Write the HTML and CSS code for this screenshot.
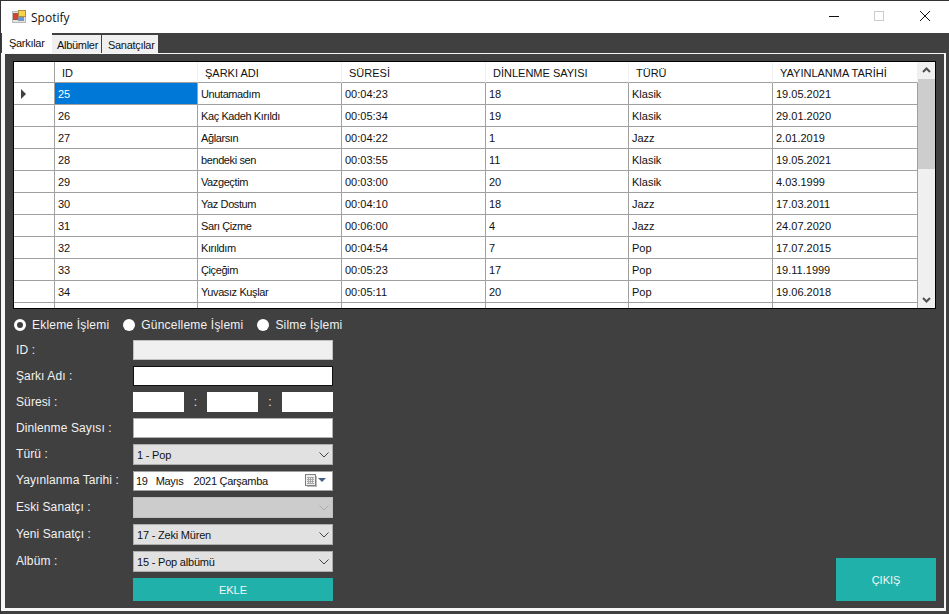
FILE: index.html
```html
<!DOCTYPE html>
<html>
<head>
  <title>Spotify</title>
  <link rel="stylesheet" href="styles.css">
</head>
<body>
  <div class="window">
    <div class="titlebar">
      <svg class="app-icon" width="16" height="16" viewBox="0 0 16 16">
        <rect x="0.5" y="2.5" width="13" height="11" fill="#e4e4e4" stroke="#b8b8b8"/>
        <rect x="1.500" y="4.500" width="4" height="6" fill="#d8402f" stroke="#8f5a50"/>
        <rect x="6.500" y="1.500" width="7" height="6" fill="#f8d24a" stroke="#b09040"/>
        <rect x="6.500" y="8.500" width="5" height="3" fill="#5c9be0" stroke="#7f93b0"/>
      </svg>
      <span class="app-name">Spotify</span>
      <div class="win-buttons">
        <svg class="win-btn" width="46" height="32" viewBox="0 0 46 32"><path d="M19 15.500h10" stroke="#111" fill="none"/></svg>
        <svg class="win-btn" width="46" height="32" viewBox="0 0 46 32"><rect x="18.500" y="10.500" width="9" height="9" stroke="#ccc" fill="none"/></svg>
        <svg class="win-btn" width="46" height="32" viewBox="0 0 46 32"><path d="M18 10l10 10M28 10l-10 10" stroke="#111" fill="none"/></svg>
      </div>
    </div>

    <div class="tabs">
      <div class="tab active">Şarkılar</div>
      <div class="tab">Albümler</div>
      <div class="tab last">Sanatçılar</div>
    </div>

    <div class="tabpage">
      <div class="gridview">
        <table class="grid">
          <colgroup>
            <col class="c-head"><col class="c-id"><col class="c-name"><col class="c-time"><col class="c-count"><col class="c-type"><col class="c-date">
          </colgroup>
          <thead>
            <tr><th class="corner"></th><th>ID</th><th>ŞARKI ADI</th><th>SÜRESİ</th><th>DİNLENME SAYISI</th><th>TÜRÜ</th><th>YAYINLANMA TARİHİ</th></tr>
          </thead>
          <tbody>
            <tr><td class="rowhead"><span class="arrow"></span></td><td class="selected">25</td><td class="name">Unutamadım</td><td>00:04:23</td><td>18</td><td>Klasik</td><td>19.05.2021</td></tr>
            <tr><td class="rowhead"></td><td>26</td><td class="name">Kaç Kadeh Kırıldı</td><td>00:05:34</td><td>19</td><td>Klasik</td><td>29.01.2020</td></tr>
            <tr><td class="rowhead"></td><td>27</td><td class="name">Ağlarsın</td><td>00:04:22</td><td>1</td><td>Jazz</td><td>2.01.2019</td></tr>
            <tr><td class="rowhead"></td><td>28</td><td class="name">bendeki sen</td><td>00:03:55</td><td>11</td><td>Klasik</td><td>19.05.2021</td></tr>
            <tr><td class="rowhead"></td><td>29</td><td class="name">Vazgeçtim</td><td>00:03:00</td><td>20</td><td>Klasik</td><td>4.03.1999</td></tr>
            <tr><td class="rowhead"></td><td>30</td><td class="name">Yaz Dostum</td><td>00:04:10</td><td>18</td><td>Jazz</td><td>17.03.2011</td></tr>
            <tr><td class="rowhead"></td><td>31</td><td class="name">Sarı Çizme</td><td>00:06:00</td><td>4</td><td>Jazz</td><td>24.07.2020</td></tr>
            <tr><td class="rowhead"></td><td>32</td><td class="name">Kırıldım</td><td>00:04:54</td><td>7</td><td>Pop</td><td>17.07.2015</td></tr>
            <tr><td class="rowhead"></td><td>33</td><td class="name">Çiçeğim</td><td>00:05:23</td><td>17</td><td>Pop</td><td>19.11.1999</td></tr>
            <tr><td class="rowhead"></td><td>34</td><td class="name">Yuvasız Kuşlar</td><td>00:05:11</td><td>20</td><td>Pop</td><td>19.06.2018</td></tr>
            <tr><td class="rowhead"></td><td></td><td></td><td></td><td></td><td></td><td></td></tr>
          </tbody>
        </table>
        <div class="scrollbar">
          <svg class="sb-arrow" width="17" height="17" viewBox="0 0 17 17"><path d="M5 10l3.500-3.500L12 10" stroke="#505050" stroke-width="2" fill="none"/></svg>
          <div class="sb-track"><div class="sb-thumb"></div></div>
          <svg class="sb-arrow" width="17" height="17" viewBox="0 0 17 17"><path d="M5 7l3.500 3.500L12 7" stroke="#505050" stroke-width="2" fill="none"/></svg>
        </div>
      </div>

      <div class="bottom">
        <div class="form">
          <div class="radios">
            <label class="radio checked">Ekleme İşlemi</label>
            <label class="radio">Güncelleme İşlemi</label>
            <label class="radio">Silme İşlemi</label>
          </div>

          <div class="row"><span class="lbl">ID :</span><div class="input disabled"></div></div>
          <div class="row"><span class="lbl">Şarkı Adı :</span><div class="input focused"></div></div>
          <div class="row">
            <span class="lbl">Süresi :</span>
            <div class="time">
              <div class="input"></div><span class="colon">:</span><div class="input"></div><span class="colon wide">:</span><div class="input"></div>
            </div>
          </div>
          <div class="row"><span class="lbl">Dinlenme Sayısı :</span><div class="input"></div></div>
          <div class="row tall">
            <span class="lbl">Türü :</span>
            <div class="combo">1 - Pop<svg class="chev" width="10" height="6" viewBox="0 0 10 6"><path d="M0.500 0.500l4.500 4.500 4.500-4.500" stroke="#444" fill="none"/></svg></div>
          </div>
          <div class="row tall date-row">
            <span class="lbl">Yayınlanma Tarihi :</span>
            <div class="date">
              <span class="d1">19</span><span class="d2">Mayıs</span><span>2021 Çarşamba</span>
              <svg class="cal" width="22" height="14" viewBox="0 0 22 14">
                <rect x="2" y="2" width="10" height="11" fill="#bbb"/>
                <rect x="0.500" y="0.500" width="10" height="11" fill="#eee" stroke="#808080"/>
                <path d="M2 3.500h7M2 5.500h7M2 7.500h7M2 9.500h7M3.500 3v7M5.500 3v7M7.500 3v7" stroke="#a8a8a8" fill="none"/>
                <path d="M13 4h8l-4 4z" fill="#4a5f86"/>
              </svg>
            </div>
          </div>
          <div class="row tall">
            <span class="lbl">Eski Sanatçı :</span>
            <div class="combo off"><svg class="chev" width="10" height="6" viewBox="0 0 10 6"><path d="M0.500 0.500l4.500 4.500 4.500-4.500" stroke="#aaa" fill="none"/></svg></div>
          </div>
          <div class="row tall">
            <span class="lbl">Yeni Sanatçı :</span>
            <div class="combo">17 - Zeki Müren<svg class="chev" width="10" height="6" viewBox="0 0 10 6"><path d="M0.500 0.500l4.500 4.500 4.500-4.500" stroke="#444" fill="none"/></svg></div>
          </div>
          <div class="row tall">
            <span class="lbl">Albüm :</span>
            <div class="combo">15 - Pop albümü<svg class="chev" width="10" height="6" viewBox="0 0 10 6"><path d="M0.500 0.500l4.500 4.500 4.500-4.500" stroke="#444" fill="none"/></svg></div>
          </div>
          <div class="row btn-row"><button class="btn add">EKLE</button></div>
        </div>
        <button class="btn exit">ÇIKIŞ</button>
      </div>
    </div>
  </div>
</body>
</html>
```

FILE: styles.css
```css
*, *::before {
  box-sizing: border-box;
}

html, body {
  margin: 0;
  height: 100%;
}

body {
  font-family: "Liberation Sans", Arial, sans-serif;
  font-size: 11px;
  overflow: hidden;
}

.window {
  width: 949px;
  height: 614px;
  background: #404040;
  border-top: 1px solid #333;
  border-left: 1px solid #333;
  display: flex;
  flex-direction: column;
}

.titlebar {
  height: 32px;
  background: #fff;
  display: flex;
  align-items: center;
  padding-left: 11px;
  padding-right: 1px;
  flex: none;
}

.app-icon {
  display: block;
}

.app-name {
  margin-left: 3px;
  font-family: "Open Sans", sans-serif;
  font-size: 12px;
  color: #111;
}

.win-buttons {
  margin-left: auto;
  display: flex;
}

.win-btn {
  display: block;
}

.tabs {
  height: 20px;
  display: flex;
  align-items: flex-end;
  padding-left: 1px;
  flex: none;
}

.tab {
  width: 49px;
  height: 18px;
  padding: 4px 0 0 5px;
  margin-right: 1px;
  background: #f0f0f0;
  color: #111;
  letter-spacing: -0.3px;
  white-space: nowrap;
}

.tab.active {
  height: 20px;
  width: 50px;
  background: #fff;
  padding: 4px 0 0 7px;
  margin-right: 0;
}

.tab.last {
  width: 56px;
  padding-left: 6px;
}

.tabpage {
  flex: 1;
  margin: 0 3px 3px 0;
  border-style: solid;
  border-color: #f6f6f6;
  border-width: 1px 2px 3px 4px;
  background: #404040;
  padding: 7px 8px 7px 8px;
  display: flex;
  flex-direction: column;
}

.gridview {
  width: 923px;
  height: 248px;
  border: 1px solid #000;
  background: #fff;
  display: flex;
  overflow: hidden;
  flex: none;
}

.grid {
  width: 904px;
  table-layout: fixed;
  border-collapse: separate;
  border-spacing: 0;
  color: #111;
  align-self: flex-start;
  flex: none;
}

.c-head {
  width: 41px;
}

.c-id {
  width: 143px;
}

.c-name, .c-time, .c-type {
  width: 144px;
}

.c-count {
  width: 143px;
}

.c-date {
  width: 145px;
}

.grid th {
  height: 21px;
  padding: 1px 0 0 7px;
  font-weight: normal;
  text-align: left;
  border-right: 1px solid #f0f0f0;
  border-bottom: 1px solid #a0a0a0;
  white-space: nowrap;
}

.grid th.corner {
  border-right-color: #a0a0a0;
}

.grid td {
  height: 22px;
  padding: 0 0 0 3px;
  border-right: 1px solid #a0a0a0;
  border-bottom: 1px solid #a0a0a0;
  white-space: nowrap;
}

.grid td.name {
  letter-spacing: -0.4px;
}

.grid td.rowhead {
  padding: 0 0 0 7px;
}

.grid td.selected {
  background: #0078d7;
  color: #fff;
}

.arrow {
  display: block;
  width: 0;
  height: 0;
  border-left: 5px solid #404040;
  border-top: 5px solid transparent;
  border-bottom: 5px solid transparent;
}

.scrollbar {
  width: 17px;
  margin-left: auto;
  background: #f0f0f0;
  display: flex;
  flex-direction: column;
}

.sb-arrow {
  flex: none;
  display: block;
}

.sb-track {
  flex: 1;
}

.sb-thumb {
  height: 90px;
  background: #cdcdcd;
}

.bottom {
  flex: 1;
  display: flex;
  justify-content: space-between;
  align-items: flex-end;
  color: #f2f2f2;
}

.form {
  width: 340px;
  padding-top: 8px;
  font-size: 12px;
}

.radios {
  display: flex;
  height: 16px;
  margin-bottom: 7px;
  padding-left: 1px;
  align-items: center;
  white-space: nowrap;
}

.radio {
  display: flex;
  align-items: center;
  margin-right: 14px;
  letter-spacing: 0.2px;
}

.radio::before {
  content: "";
  width: 12px;
  height: 12px;
  border-radius: 50%;
  background: #fff;
  margin-right: 6px;
}

.radio.checked::before {
  background: #404040;
  border: 3px solid #fff;
}

.row {
  display: flex;
  align-items: center;
  height: 20px;
  margin-bottom: 6px;
}

.row.tall {
  height: 21px;
}

.row.date-row {
  height: 20px;
}

.lbl {
  width: 120px;
  padding-left: 3px;
  flex: none;
  letter-spacing: 0.1px;
  white-space: nowrap;
}

.row.tall .lbl {
  padding-bottom: 2px;
}

.input {
  width: 200px;
  height: 20px;
  background: #fff;
  border: 1px solid #b0b0b0;
  flex: none;
}

.input.disabled {
  background: #f0f0f0;
  border-color: #c0c0c0;
}

.input.focused {
  border-color: #111;
}

.time {
  display: flex;
  align-items: center;
  width: 200px;
}

.time .input {
  width: 51px;
  border-color: #fff;
}

.colon {
  width: 23px;
  text-align: center;
}

.colon.wide {
  width: 24px;
}

.combo {
  width: 200px;
  height: 21px;
  background: #e1e1e1;
  border: 1px solid #adadad;
  color: #111;
  font-size: 11px;
  letter-spacing: -0.2px;
  padding: 0 3px;
  display: flex;
  align-items: center;
  justify-content: space-between;
}

.combo.off {
  background: #ccc;
  border-color: #bfbfbf;
  justify-content: flex-end;
}

.date {
  width: 200px;
  height: 20px;
  background: #fff;
  border: 1px solid #a0a0a0;
  color: #111;
  font-size: 11px;
  letter-spacing: -0.3px;
  display: flex;
  align-items: center;
  padding-left: 2px;
}

.d1 {
  margin-right: 8px;
}

.d2 {
  margin-right: 10px;
}

.cal {
  margin-left: auto;
  margin-right: 5px;
}

.btn {
  border: 0;
  background: #20b2aa;
  color: #f5f5f5;
  font-family: inherit;
  font-size: 11px;
  padding: 0;
}

.btn-row {
  height: 23px;
  margin-bottom: 0;
  padding-left: 120px;
}

.add {
  width: 200px;
  height: 23px;
}

.exit {
  width: 100px;
  height: 43px;
}
```
